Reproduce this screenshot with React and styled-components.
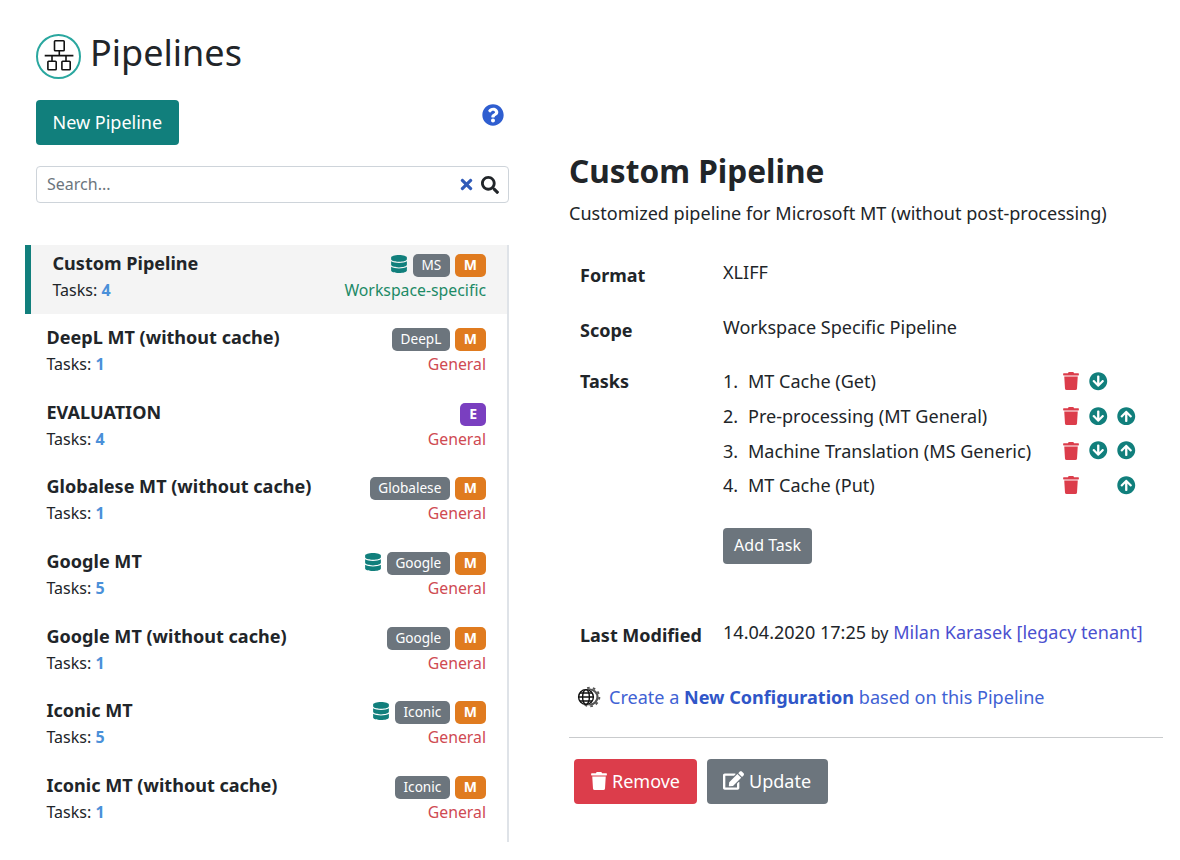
import React from "react";
import styled, { createGlobalStyle } from "styled-components";
import { FaDatabase, FaTrash, FaArrowCircleDown, FaArrowCircleUp, FaQuestionCircle, FaTimes, FaSearch, FaEdit } from "react-icons/fa";

const Global = createGlobalStyle`
  html, body { margin: 0; padding: 0; background: #fff; }
  body { font-family: "Noto Sans", sans-serif; font-size: 18.06px; line-height: 24px; color: #212529; height: 860px; overflow: hidden; }
  * { box-sizing: border-box; }
`;

const Page = styled.div`
  display: grid;
  grid-template-columns: 484px 1fr;
  column-gap: 60px;
  padding: 0 17px 0 25px;
  height: 860px;
  overflow: hidden;
`;
const Left = styled.div`
  display: flex;
  flex-direction: column;
  padding-top: 29px;
`;
const Head = styled.div`
  display: flex;
  align-items: center;
  gap: 9px;
  padding-left: 11px;
  height: 48px;
`;
const Logo = styled.span`
  width: 45px;
  height: 45px;
  margin-top: 7px;
  border: 2px solid #2aa79f;
  border-radius: 50%;
  display: flex;
  align-items: center;
  justify-content: center;
`;
const Title = styled.h1`
  margin: 0;
  font-size: 36px;
  font-weight: 400;
  line-height: 48px;
`;
const ActionRow = styled.div`
  display: flex;
  justify-content: space-between;
  align-items: flex-start;
  margin-top: 23px;
  padding: 0 5px 0 11px;
`;
const PrimaryButton = styled.button`
  font: inherit;
  font-size: 18px;
  color: #fff;
  background: #117f7c;
  border: 0;
  border-radius: 4px;
  height: 45px;
  padding: 0 16.5px 2px;
`;
const Help = styled.span`
  color: #2f5ed0;
  font-size: 22px;
  display: flex;
  margin-top: 4px;
`;
const Search = styled.div`
  display: flex;
  align-items: center;
  margin: 21px 0 0 11px;
  width: 473px;
  height: 37px;
  border: 1px solid #ced4da;
  border-radius: 4px;
  padding: 0 9px 0 10px;
  gap: 6px;
  color: #6c757d;
`;
const SearchText = styled.span`
  flex: 1;
  font-size: 16px;
  padding-bottom: 2px;
`;
const ClearIcon = styled(FaTimes)`
  color: #2f5ab8;
  font-size: 17px;
`;
const SearchIcon = styled(FaSearch)`
  color: #212529;
  font-size: 18px;
`;
const List = styled.div`
  margin-top: 42px;
  height: 597px;
  border-right: 2px solid #dfe3e8;
  display: flex;
  flex-direction: column;
  gap: 5.67px;
`;
const Row = styled.div`
  height: 69px;
  flex: none;
  display: grid;
  grid-template-columns: 1fr auto;
  grid-template-rows: 27px 24px;
  align-content: start;
  padding: 5.5px 21px 0 21.5px;
  background: ${p => (p.$active ? "#f4f4f4" : "transparent")};
  border-left: ${p => (p.$active ? "6px solid #117f7c" : "0")};
`;
const RowTitle = styled.div`
  font-weight: 700;
  font-size: 18.06px;
  line-height: 24px;
`;
const Badges = styled.div`
  display: flex;
  align-items: flex-end;
  justify-content: flex-end;
  gap: 5px;
  padding-bottom: 1px;
`;
const DbIcon = styled(FaDatabase)`
  color: #117f7c;
  font-size: 18px;
  align-self: center;
`;
const Badge = styled.span`
  font-size: ${p => (p.$bold ? "14px" : "13.6px")};
  line-height: 22px;
  height: 23px;
  padding: 0 ${p => (p.$bold ? "9px" : "8.5px")};
  border-radius: 5px;
  color: #fff;
  background: ${p => p.$bg};
  font-weight: ${p => (p.$bold ? 700 : 400)};
`;
const Tasks = styled.div`
  font-size: 16px;
  line-height: 24px;
`;
const Count = styled.span`
  color: #4a90d9;
  font-weight: 700;
`;
const Kind = styled.div`
  font-size: 15.8px;
  line-height: 24px;
  text-align: right;
  color: ${p => (p.$ws ? "#1c8a66" : "#cf4a52")};
`;
const Right = styled.div`
  padding-top: 150px;
`;
const DetailTitle = styled.h2`
  margin: 0;
  font-size: 31.6px;
  font-weight: 700;
  line-height: 42px;
`;
const Subtitle = styled.p`
  margin: 9px 0 0;
`;
const Fields = styled.div`
  display: grid;
  grid-template-columns: 143px 1fr;
  padding-left: 11px;
  margin-top: 35px;
`;
const Label = styled.div`
  font-weight: 700;
  font-size: 18px;
  padding-top: ${p => p.$pt || 0}px;
`;
const Value = styled.div`
  padding-bottom: ${p => p.$pb || 0}px;
`;
const TaskRow = styled.div`
  display: grid;
  grid-template-columns: 25px 314px 27px 28px 28px;
  height: 34.7px;
  align-items: center;
`;
const TrashIcon = styled(FaTrash)`
  color: #dc3d4b;
  font-size: 18px;
`;
const DownIcon = styled(FaArrowCircleDown)`
  color: #117f7c;
  font-size: 18.5px;
`;
const UpIcon = styled(FaArrowCircleUp)`
  color: #117f7c;
  font-size: 18.5px;
`;
const AddTask = styled.button`
  font: inherit;
  font-size: 16px;
  color: #fff;
  background: #6c757d;
  border: 0;
  border-radius: 4px;
  height: 36px;
  width: 89px;
  padding: 0 0 2px;
  margin-top: 25px;
  display: block;
`;
const By = styled.span`
  font-size: 16px;
`;
const NameLink = styled.a`
  color: #4a50cf;
`;
const Create = styled.div`
  display: flex;
  align-items: center;
  gap: 8px;
  margin: 38px 0 0 8px;
  color: #3f62d4;
`;
const Strong = styled.b`
  font-weight: 700;
  color: #3056c8;
`;
const Rule = styled.hr`
  border: 0;
  border-top: 1px solid #c9cbcd;
  margin: 28px 0 0;
`;
const Footer = styled.div`
  display: flex;
  gap: 10px;
  margin: 21px 0 0 5px;
`;
const FooterButton = styled.button`
  font: inherit;
  font-size: 18px;
  color: #fff;
  background: ${p => p.$bg};
  border: 0;
  border-radius: 4px;
  height: 45px;
  padding: 0 17px 1px 16px;
  display: flex;
  align-items: center;
  gap: ${p => p.$gap}px;
`;

const rows = [
  { t: "Custom Pipeline", n: 4, b: "MS", db: true, active: true },
  { t: "DeepL MT (without cache)", n: 1, b: "DeepL" },
  { t: "EVALUATION", n: 4, e: true },
  { t: "Globalese MT (without cache)", n: 1, b: "Globalese" },
  { t: "Google MT", n: 5, b: "Google", db: true },
  { t: "Google MT (without cache)", n: 1, b: "Google" },
  { t: "Iconic MT", n: 5, b: "Iconic", db: true },
  { t: "Iconic MT (without cache)", n: 1, b: "Iconic" },
];

const tasks = [
  ["1.", "MT Cache (Get)", true, false],
  ["2.", "Pre-processing (MT General)", true, true],
  ["3.", "Machine Translation (MS Generic)", true, true],
  ["4.", "MT Cache (Put)", false, true],
];

export default function App() {
  return (
    <Page>
      <Global />
      <Left>
        <Head>
          <Logo>
            <svg width="34" height="34" viewBox="0 0 34 34" fill="none" stroke="#111" strokeWidth="1.6">
              <rect x="12.5" y="0.8" width="9.7" height="10" rx="0.8" />
              <path d="M17.3 10.8v4.8M2.7 15.6h28.7M10 15.6v5.6M24 15.6v5.6" />
              <rect x="5.9" y="21.2" width="8.3" height="8.6" rx="0.8" />
              <rect x="19.9" y="21.2" width="8.3" height="8.6" rx="0.8" />
            </svg>
          </Logo>
          <Title>Pipelines</Title>
        </Head>
        <ActionRow>
          <PrimaryButton>New Pipeline</PrimaryButton>
          <Help><FaQuestionCircle /></Help>
        </ActionRow>
        <Search>
          <SearchText>Search...</SearchText>
          <ClearIcon />
          <SearchIcon />
        </Search>
        <List>
          {rows.map(r => (
            <Row key={r.t} $active={r.active}>
              <RowTitle>{r.t}</RowTitle>
              <Badges>
                {r.db && <DbIcon />}
                {r.b && <Badge $bg="#6c757d">{r.b}</Badge>}
                {r.e ? <Badge $bold $bg="#7a3fc0">E</Badge> : <Badge $bold $bg="#e07b1f">M</Badge>}
              </Badges>
              <Tasks>Tasks: <Count>{r.n}</Count></Tasks>
              <Kind $ws={r.active}>{r.active ? "Workspace-specific" : "General"}</Kind>
            </Row>
          ))}
        </List>
      </Left>
      <Right>
        <DetailTitle>Custom Pipeline</DetailTitle>
        <Subtitle>Customized pipeline for Microsoft MT (without post-processing)</Subtitle>
        <Fields>
          <Label $pt={3}>Format</Label>
          <Value $pb={31}>XLIFF</Value>
          <Label $pt={3}>Scope</Label>
          <Value $pb={25}>Workspace Specific Pipeline</Value>
          <Label $pt={5}>Tasks</Label>
          <Value $pb={56}>
            {tasks.map(([i, n, d, u]) => (
              <TaskRow key={i}>
                <span>{i}</span>
                <span>{n}</span>
                <TrashIcon />
                {d ? <DownIcon /> : <span />}
                {u ? <UpIcon /> : <span />}
              </TaskRow>
            ))}
            <AddTask>Add Task</AddTask>
          </Value>
          <Label $pt={3}>Last Modified</Label>
          <Value>14.04.2020 17:25 <By>by</By> <NameLink>Milan Karasek [legacy tenant]</NameLink></Value>
        </Fields>
        <Create>
          <svg width="24" height="24" viewBox="0 0 24 24" fill="none">
            <circle cx="13" cy="12" r="7.5" stroke="#555" strokeWidth="2.2" />
            <circle cx="13" cy="12" r="9.3" stroke="#555" strokeWidth="2" strokeDasharray="2.6 3.2" />
            <circle cx="9" cy="12" r="8" fill="#fff" />
            <g stroke="#111" strokeWidth="1.4">
              <circle cx="9" cy="12" r="7.4" />
              <ellipse cx="9" cy="12" rx="3.4" ry="7.4" />
              <path d="M1.6 12h14.8M2.8 8h12.4M2.8 16h12.4" />
            </g>
          </svg>
          <span>Create a <Strong>New Configuration</Strong> based on this Pipeline</span>
        </Create>
        <Rule />
        <Footer>
          <FooterButton $bg="#dc3d4b" $gap={4}><FaTrash size={18} />Remove</FooterButton>
          <FooterButton $bg="#6c757d" $gap={5}><FaEdit size={21} />Update</FooterButton>
        </Footer>
      </Right>
    </Page>
  );
}
